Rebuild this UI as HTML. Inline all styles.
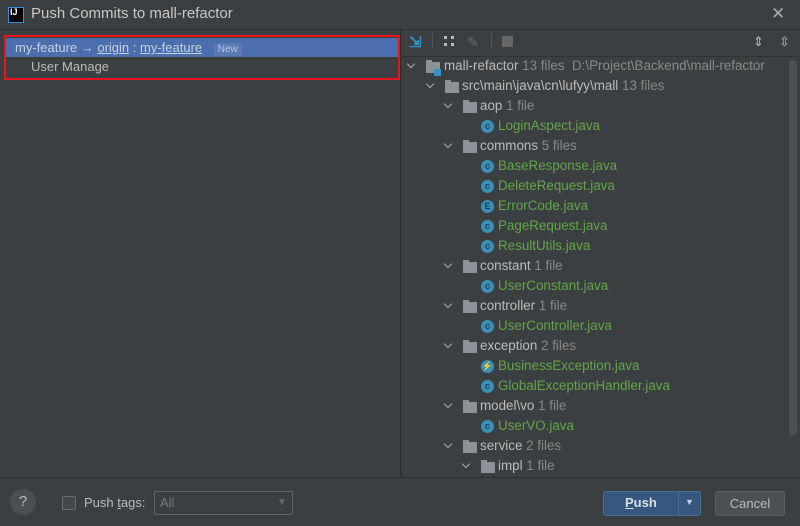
<!DOCTYPE html><html><head><style>
*{margin:0;padding:0;box-sizing:border-box}
body{width:800px;height:526px;background:#3c3f41;font-family:"Liberation Sans",sans-serif;font-size:13px;color:#bbbbbb;position:relative;overflow:hidden}
.a{position:absolute;white-space:nowrap}
.row{position:absolute;height:20px;line-height:20px;white-space:nowrap;font-size:13.4px}
.g{color:#888}
.f{color:#62a548}
.chev{position:absolute;width:6px;height:6px;border-right:1.5px solid #aaa;border-bottom:1.5px solid #aaa;transform:rotate(45deg)}
.fold{position:absolute;width:14px;height:11px;background:#8d9298}
.fold:before{content:"";position:absolute;left:0;top:-2px;width:6px;height:2px;background:#8d9298}
.c{position:absolute;width:13px;height:13px;border-radius:50%;background:#3a8fb7;color:#1d3b4a;font-size:9px;font-weight:bold;text-align:center;line-height:13px}
</style></head><body>
<div class="a" style="left:8px;top:7px;width:16px;height:16px;background:#000;border:1px solid #3d8ee8"></div>
<div class="a" style="left:10px;top:7px;color:#fff;font-size:9px;font-weight:bold">IJ</div>
<div class="a" style="left:31px;top:5px;font-size:15px;color:#c8c8c8">Push Commits to mall-refactor</div>
<div class="a" style="left:771px;top:4px;font-size:17px;color:#aaa">✕</div>
<div class="a" style="left:0;top:29px;width:800px;height:1px;background:#323232"></div>
<div class="a" style="left:400px;top:30px;width:1px;height:447px;background:#2b2b2b"></div>
<div class="a" style="left:5px;top:38px;width:394px;height:19px;background:#4b6eaf"></div>
<div class="a" style="left:15px;top:39px;line-height:17px;color:#c8d0dd">my-feature → <u>origin</u> : <u>my-feature</u> <span style="background:#5a79b4;font-size:10px;padding:1px 4px;margin-left:8px;color:#bcc8dc">New</span></div>
<div class="a" style="left:31px;top:58px;line-height:17px">User Manage</div>
<div class="a" style="left:4px;top:35px;width:396px;height:45px;border:2px solid #e8141e"></div>
<!-- toolbar -->
<div class="a" style="left:409px;top:33px;color:#3592c4;font-size:15px;font-weight:bold">⇲</div>
<div class="a" style="left:432px;top:33px;width:1px;height:16px;background:#555"></div>
<div class="a" style="left:444px;top:36px;width:10px;height:10px;border:3px dotted #bbb"></div>
<div class="a" style="left:467px;top:34px;color:#666;font-size:14px">✎</div>
<div class="a" style="left:491px;top:33px;width:1px;height:16px;background:#555"></div>
<div class="a" style="left:502px;top:36px;width:11px;height:11px;background:#666"></div>
<div class="a" style="left:753px;top:34px;font-size:13px;color:#bbb">⇕</div>
<div class="a" style="left:779px;top:34px;font-size:13px;color:#bbb">⇳</div>
<div class="a" style="left:400px;top:56px;width:400px;height:1px;background:#323232"></div>
<div class="a" style="left:789px;top:60px;width:8px;height:375px;background:#4d5052;border-radius:4px"></div>
<!-- tree -->
<div class="chev" style="left:408px;top:61px"></div><div class="fold" style="left:426px;top:62px"></div><div class="a" style="left:434px;top:69px;width:7px;height:7px;background:#3592c4"></div>
<div class="row" style="left:444px;top:56px">mall-refactor <span class="g">13 files &nbsp;D:\Project\Backend\mall-refactor</span></div>
<div class="chev" style="left:427px;top:81px"></div><div class="fold" style="left:445px;top:82px"></div>
<div class="row" style="left:462px;top:76px">src\main\java\cn\lufyy\mall <span class="g">13 files</span></div>

<div class="chev" style="left:445px;top:101px"></div><div class="fold" style="left:463px;top:102px"></div><div class="row" style="left:480px;top:96px">aop <span class="g">1 file</span></div>
<div class="c" style="left:481px;top:120px">c</div><div class="row f" style="left:498px;top:116px">LoginAspect.java</div>
<div class="chev" style="left:445px;top:141px"></div><div class="fold" style="left:463px;top:142px"></div><div class="row" style="left:480px;top:136px">commons <span class="g">5 files</span></div>
<div class="c" style="left:481px;top:160px">c</div><div class="row f" style="left:498px;top:156px">BaseResponse.java</div>
<div class="c" style="left:481px;top:180px">c</div><div class="row f" style="left:498px;top:176px">DeleteRequest.java</div>
<div class="c" style="left:481px;top:200px">E</div><div class="row f" style="left:498px;top:196px">ErrorCode.java</div>
<div class="c" style="left:481px;top:220px">c</div><div class="row f" style="left:498px;top:216px">PageRequest.java</div>
<div class="c" style="left:481px;top:240px">c</div><div class="row f" style="left:498px;top:236px">ResultUtils.java</div>
<div class="chev" style="left:445px;top:261px"></div><div class="fold" style="left:463px;top:262px"></div><div class="row" style="left:480px;top:256px">constant <span class="g">1 file</span></div>
<div class="c" style="left:481px;top:280px">c</div><div class="row f" style="left:498px;top:276px">UserConstant.java</div>
<div class="chev" style="left:445px;top:301px"></div><div class="fold" style="left:463px;top:302px"></div><div class="row" style="left:480px;top:296px">controller <span class="g">1 file</span></div>
<div class="c" style="left:481px;top:320px">c</div><div class="row f" style="left:498px;top:316px">UserController.java</div>
<div class="chev" style="left:445px;top:341px"></div><div class="fold" style="left:463px;top:342px"></div><div class="row" style="left:480px;top:336px">exception <span class="g">2 files</span></div>
<div class="c" style="left:481px;top:360px">⚡</div><div class="row f" style="left:498px;top:356px">BusinessException.java</div>
<div class="c" style="left:481px;top:380px">c</div><div class="row f" style="left:498px;top:376px">GlobalExceptionHandler.java</div>
<div class="chev" style="left:445px;top:401px"></div><div class="fold" style="left:463px;top:402px"></div><div class="row" style="left:480px;top:396px">model\vo <span class="g">1 file</span></div>
<div class="c" style="left:481px;top:420px">c</div><div class="row f" style="left:498px;top:416px">UserVO.java</div>
<div class="chev" style="left:445px;top:441px"></div><div class="fold" style="left:463px;top:442px"></div><div class="row" style="left:480px;top:436px">service <span class="g">2 files</span></div>
<div class="chev" style="left:463px;top:461px"></div><div class="fold" style="left:481px;top:462px"></div><div class="row" style="left:498px;top:456px">impl <span class="g">1 file</span></div>
<!-- bottom -->
<div class="a" style="left:0;top:477px;width:800px;height:49px;background:#3c3f41;border-top:1px solid #2f3133"></div>
<div class="a" style="left:10px;top:489px;width:26px;height:26px;border-radius:50%;background:#4c4f51;color:#bbb;text-align:center;line-height:26px;font-size:15px">?</div>
<div class="a" style="left:62px;top:496px;width:14px;height:14px;border:1px solid #6b6b6b;border-radius:2px;background:#43494a"></div>
<div class="a" style="left:84px;top:495px">Push <u>t</u>ags:</div>
<div class="a" style="left:154px;top:491px;width:139px;height:24px;border:1px solid #646464;border-radius:2px;background:#3c3f41"></div>
<div class="a" style="left:160px;top:495px;color:#777">All</div>
<div class="a" style="left:277px;top:497px;color:#666;font-size:10px">▼</div>
<div class="a" style="left:603px;top:491px;width:98px;height:25px;border:1px solid #4c708c;border-radius:3px;background:#365880"></div>
<div class="a" style="left:678px;top:492px;width:1px;height:23px;background:#4c708c"></div>
<div class="a" style="left:625px;top:495px;font-weight:bold;color:#d8dde4"><u>P</u>ush</div>
<div class="a" style="left:685px;top:497px;color:#ccd;font-size:9px">▼</div>
<div class="a" style="left:715px;top:491px;width:70px;height:25px;border:1px solid #5e6060;border-radius:3px;background:#4c5052;text-align:center;line-height:23px">Cancel</div>
</body></html>
